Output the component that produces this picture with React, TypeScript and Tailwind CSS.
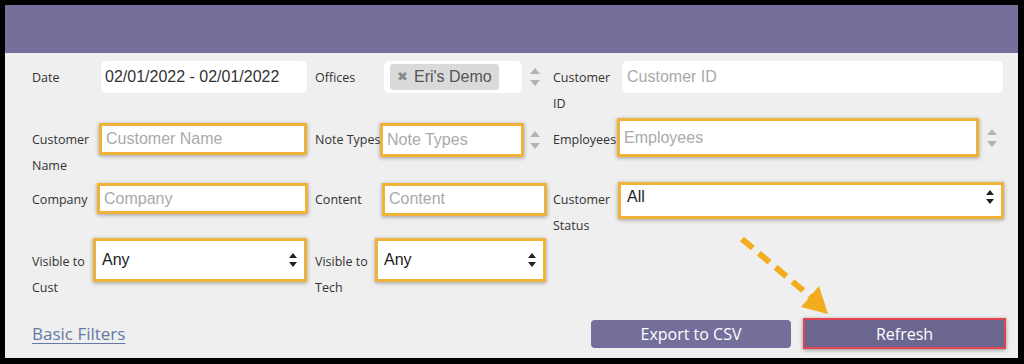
const label = "shrink-0 pt-[4px] text-[12.5px] leading-[26px] text-[#333]";
const orange =
  "border-[3px] border-[#efb23a] bg-white shadow-[0_1px_4px_rgba(0,0,0,0.35)]";
const field =
  "w-full h-full bg-transparent px-[4px] text-[16px] text-[#333] outline-none placeholder:text-[#aaa] font-['Liberation_Sans',Arial,sans-serif]";

function Spinner() {
  return (
    <div className="flex w-[20px] shrink-0 flex-col items-center justify-center gap-[6px] self-center">
      <svg width="10" height="6" viewBox="0 0 10 6">
        <path d="M5 0L10 6H0z" fill="#b3b3b3" />
      </svg>
      <svg width="10" height="6" viewBox="0 0 10 6">
        <path d="M0 0H10L5 6z" fill="#b3b3b3" />
      </svg>
    </div>
  );
}

function SelectArrows() {
  return (
    <svg width="8" height="14" viewBox="0 0 8 14" className="shrink-0">
      <path d="M4 0L8 5H0z" fill="#222" />
      <path d="M0 9H8L4 14z" fill="#222" />
    </svg>
  );
}

function Select({ value }: { value: string }) {
  return (
    <div className="flex h-full w-full items-center justify-between pl-[6px] pr-[7px] font-['Liberation_Sans',Arial,sans-serif] text-[16px] text-[#222]">
      <span>{value}</span>
      <SelectArrows />
    </div>
  );
}

export default function App() {
  return (
    <div
      className="relative h-[364px] w-[1024px] bg-black pt-[5px] pl-[5px] pr-[6px] pb-[6px]"
      style={{ fontFamily: '"Open Sans", "Noto Sans", sans-serif' }}
    >
      <div className="h-[48px] bg-[#75709b]" />
      <div className="h-[305px] bg-[#efefef] pl-[27px] pt-[8px]">
        {/* Row 1 */}
        <div className="flex h-[62px]">
          <div className="flex w-[283px]">
            <div className={label + " w-[69px]"}>Date</div>
            <div className="h-[32px] w-[206px] rounded-[5px] bg-white">
              <input className={field} defaultValue="02/01/2022 - 02/01/2022" />
            </div>
          </div>
          <div className="flex w-[238px]">
            <div className={label + " w-[69px]"}>Offices</div>
            <div className="flex h-[32px] w-[138px] items-center rounded-[5px] bg-white pl-[6px]">
              <span className="flex h-[26px] items-center gap-[6px] rounded-[3px] bg-[#dadada] pl-[7px] pr-[7px] font-['Liberation_Sans',Arial,sans-serif] text-[16px] text-[#555]">
                <span className="text-[13px] text-[#8a8a8a]">✖</span>
                Eri's Demo
              </span>
            </div>
            <div className="flex h-[32px] pl-[3px]">
              <Spinner />
            </div>
          </div>
          <div className="flex">
            <div className={label + " w-[69px]"}>Customer ID</div>
            <div className="h-[32px] w-[381px] rounded-[5px] bg-white">
              <input className={field + " px-[5px]"} placeholder="Customer ID" />
            </div>
          </div>
        </div>

        {/* Row 2 */}
        <div className="flex h-[60px]">
          <div className="flex w-[283px]">
            <div className={label + " w-[67px]"}>Customer Name</div>
            <div className={"h-[32px] w-[208px] " + orange}>
              <input className={field} placeholder="Customer Name" />
            </div>
          </div>
          <div className="flex w-[238px]">
            <div className={label + " w-[65px] whitespace-nowrap"}>Note Types</div>
            <div className={"h-[34px] w-[144px] " + orange}>
              <input className={field} placeholder="Note Types" />
            </div>
            <div className="flex h-[34px] pl-[1px]">
              <Spinner />
            </div>
          </div>
          <div className="flex">
            <div className={label + " w-[64px] whitespace-nowrap"}>Employees</div>
            <div className={"-mt-[5px] h-[39px] w-[362px] " + orange}>
              <input className={field} placeholder="Employees" />
            </div>
            <div className="-mt-[5px] flex h-[39px] pl-[3px]">
              <Spinner />
            </div>
          </div>
        </div>

        {/* Row 3 */}
        <div className="flex h-[60px]">
          <div className="flex w-[283px]">
            <div className={label + " w-[65px]"}>Company</div>
            <div className={"h-[31px] w-[211px] " + orange}>
              <input className={field + " -mt-[3px]"} placeholder="Company" />
            </div>
          </div>
          <div className="flex w-[238px]">
            <div className={label + " w-[67px]"}>Content</div>
            <div className={"h-[33px] w-[165px] " + orange}>
              <input className={field + " -mt-[3px]"} placeholder="Content" />
            </div>
          </div>
          <div className="flex">
            <div className={label + " w-[65px]"}>Customer Status</div>
            <div className={"-mt-[1px] h-[37px] w-[386px] " + orange}>
              <div className="-mt-[4px] h-full">
                <Select value="All" />
              </div>
            </div>
          </div>
        </div>

        {/* Row 4 */}
        <div className="flex h-[60px]">
          <div className="flex w-[283px]">
            <div className={label + " w-[61px] pt-[6px]"}>Visible to Cust</div>
            <div className={"-mt-[5px] h-[44px] w-[214px] " + orange}>
              <Select value="Any" />
            </div>
          </div>
          <div className="flex w-[238px]">
            <div className={label + " w-[60px] pt-[6px]"}>Visible to Tech</div>
            <div className={"-mt-[5px] h-[44px] w-[171px] " + orange}>
              <Select value="Any" />
            </div>
          </div>
        </div>

        {/* Footer */}
        <div className="mt-[15px] flex items-center pr-[12px]">
          <a
            href="#"
            className="text-[17px] text-[#6579a6] underline underline-offset-[3px]"
          >
            Basic Filters
          </a>
          <div className="ml-auto flex items-center gap-[12px]">
            <button className="h-[28px] w-[200px] rounded-[4px] bg-[#736e9a] text-[16px] text-white">
              Export to CSV
            </button>
            <button className="h-[31px] w-[203px] border-2 border-[#e5434d] bg-[#6b6690] text-[16px] text-white shadow-[0_1px_4px_rgba(0,0,0,0.4)]">
              Refresh
            </button>
          </div>
        </div>
      </div>

      {/* annotation arrow */}
      <svg
        className="pointer-events-none absolute left-0 top-0"
        width="1024"
        height="364"
        viewBox="0 0 1024 364"
      >
        <line
          x1="742"
          y1="239"
          x2="812"
          y2="298"
          stroke="#f2ad1f"
          strokeWidth="6"
          strokeDasharray="14 8"
        />
        <path d="M828 314L801 307L819 286Z" fill="#f2ad1f" />
      </svg>
    </div>
  );
}
